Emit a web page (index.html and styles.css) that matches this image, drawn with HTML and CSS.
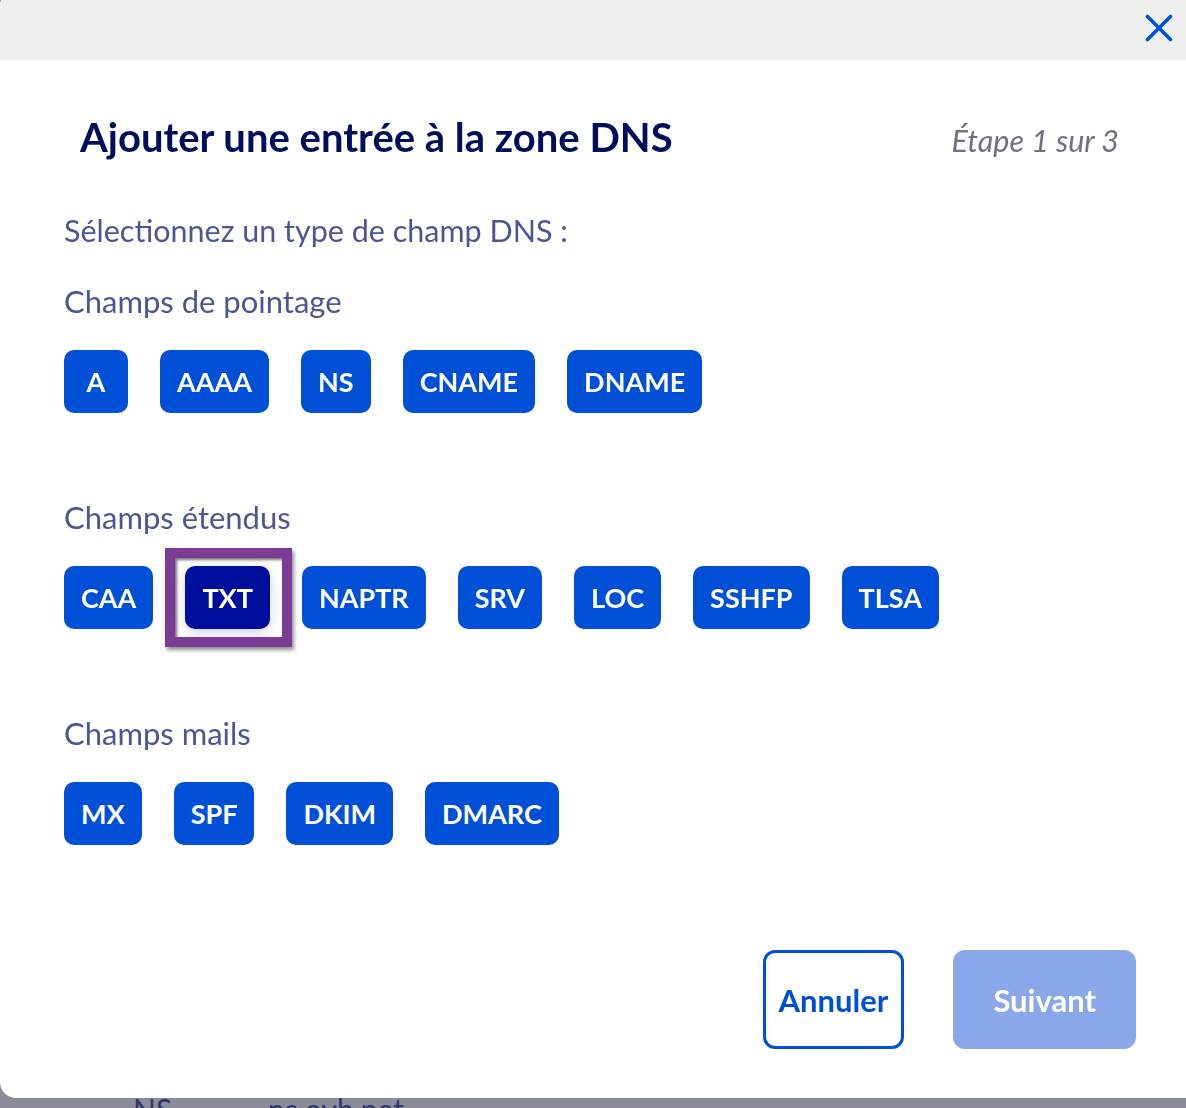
FILE: index.html
```html
<!DOCTYPE html>
<html lang="fr">
<head>
    <meta charset="UTF-8">
    <meta name="viewport" content="width=device-width, initial-scale=1.0">
    <title>Zone DNS</title>
    <link rel="stylesheet" href="styles.css">
</head>
<body>
    <div class="zone-page">
        <div class="zone-row">
            <span class="zone-type">NS</span>
            <span class="zone-target">ns.ovh.net.</span>
        </div>
    </div>

    <div class="backdrop"></div>

    <div class="modal" role="dialog" aria-labelledby="modal-title">
        <div class="modal-header">
            <button class="modal-close" aria-label="Fermer">
                <svg width="28" height="28" viewBox="0 0 28 28" fill="none" stroke="currentColor" stroke-width="3.6" stroke-linecap="round">
                    <path d="M2.5 2.5 L25.5 25.5 M25.5 2.5 L2.5 25.5"/>
                </svg>
            </button>
        </div>

        <div class="modal-body">
            <div class="modal-title-row">
                <h2 id="modal-title" class="modal-title">Ajouter une entrée à la zone DNS</h2>
                <span class="modal-step">Étape 1 sur 3</span>
            </div>

            <p class="intro">Sélectionnez un type de champ DNS :</p>

            <div class="field-groups">
                <section class="field-group">
                    <h3 class="field-label">Champs de pointage</h3>
                    <div class="type-list">
                        <button class="dns-type">A</button>
                        <button class="dns-type">AAAA</button>
                        <button class="dns-type">NS</button>
                        <button class="dns-type">CNAME</button>
                        <button class="dns-type">DNAME</button>
                    </div>
                </section>

                <section class="field-group">
                    <h3 class="field-label">Champs étendus</h3>
                    <div class="type-list">
                        <button class="dns-type">CAA</button>
                        <button class="dns-type selected">TXT</button>
                        <button class="dns-type">NAPTR</button>
                        <button class="dns-type">SRV</button>
                        <button class="dns-type">LOC</button>
                        <button class="dns-type">SSHFP</button>
                        <button class="dns-type">TLSA</button>
                    </div>
                </section>

                <section class="field-group">
                    <h3 class="field-label">Champs mails</h3>
                    <div class="type-list">
                        <button class="dns-type">MX</button>
                        <button class="dns-type">SPF</button>
                        <button class="dns-type">DKIM</button>
                        <button class="dns-type">DMARC</button>
                    </div>
                </section>
            </div>
        </div>

        <div class="modal-footer">
            <button class="btn btn-secondary">Annuler</button>
            <button class="btn btn-primary" disabled>Suivant</button>
        </div>
    </div>
</body>
</html>
```

FILE: styles.css
```css
body {
    margin: 0;
    font-family: Lato, "Noto Sans", sans-serif;
    background-color: #fff;
    color: #000e5c;
}

.zone-page {
    padding-top: 1091px;
}

.zone-row {
    display: grid;
    grid-template-columns: 135px 1fr;
    padding-left: 133px;
    font-size: 30px;
    line-height: 36px;
    color: #4d5693;
}

.backdrop {
    position: fixed;
    inset: 0;
    background-color: rgba(22, 24, 56, 0.5);
}

.modal {
    position: fixed;
    top: -10px;
    left: 0;
    width: 1186px;
    height: 1108px;
    background-color: #fff;
    border-radius: 16px 0 0 16px;
    display: flex;
    flex-direction: column;
    overflow: hidden;
}

.modal-header {
    height: 70px;
    box-sizing: border-box;
    padding: 24px 13px 0 0;
    background-color: #eeefed;
    display: flex;
    justify-content: flex-end;
    align-items: flex-start;
}

.modal-close {
    width: 28px;
    height: 28px;
    padding: 0;
    border: none;
    background: none;
    color: #0050d7;
    cursor: pointer;
}

.modal-close svg {
    display: block;
}

.modal-body {
    padding: 55px 50px 0 64px;
}

.modal-title-row {
    display: flex;
    justify-content: space-between;
    align-items: baseline;
}

.modal-title {
    margin: 0;
    padding-left: 16px;
    font-size: 40px;
    line-height: 44px;
    font-weight: 700;
    color: #000e5c;
}

.modal-step {
    margin-right: 17px;
    font-size: 30.5px;
    font-style: italic;
    color: #6e7180;
}

.intro {
    margin: 53px 0 35px;
    font-size: 30.5px;
    line-height: 36px;
    color: #4d5693;
}

.field-groups {
    display: flex;
    flex-direction: column;
    gap: 86px;
}

.field-label {
    margin: 0 0 31px;
    font-size: 31px;
    line-height: 36px;
    font-weight: 400;
    color: #4d5693;
}

.type-list {
    display: flex;
    gap: 32px;
}

.dns-type {
    position: relative;
    min-width: 64px;
    height: 63px;
    padding: 0 17px;
    border: none;
    border-radius: 10px;
    background-color: #0050d7;
    color: #fff;
    font-family: inherit;
    font-size: 27px;
    font-weight: 700;
    cursor: pointer;
}

.dns-type.selected {
    background-color: #000e9c;
    box-shadow: 0 4px 12px rgba(90, 80, 200, 0.25);
}

.dns-type.selected::after {
    content: "";
    position: absolute;
    top: -18px;
    right: -22px;
    bottom: -18px;
    left: -20px;
    border: 10px solid #7a3a96;
    box-shadow: 2px 3px 4px rgba(0, 0, 0, 0.45), inset 2px 2px 3px rgba(0, 0, 0, 0.55);
    pointer-events: none;
}

.modal-footer {
    margin-top: auto;
    padding: 0 50px 49px;
    display: flex;
    justify-content: flex-end;
    gap: 49px;
}

.btn {
    height: 99px;
    border-radius: 12px;
    font-family: inherit;
    font-size: 31px;
    font-weight: 700;
    cursor: pointer;
}

.btn-secondary {
    padding: 0 13px;
    border: 3px solid #0050d7;
    background-color: #fff;
    color: #0050d7;
}

.btn-primary {
    padding: 0 40px;
    border: none;
    background-color: #8aa7ea;
    color: #fff;
}

.btn-primary:disabled {
    cursor: not-allowed;
}
```
